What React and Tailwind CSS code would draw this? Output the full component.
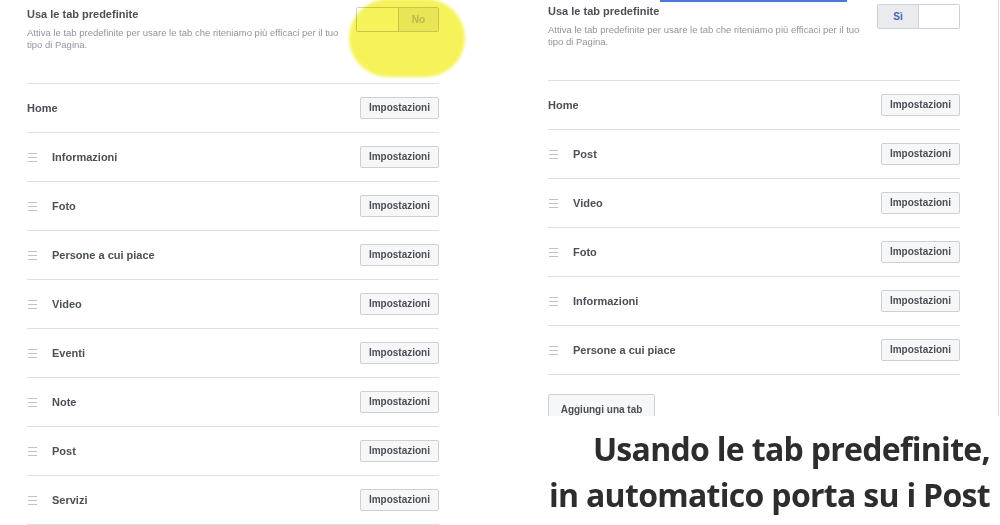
import React from 'react'

const LEFT_TABS = ['Informazioni', 'Foto', 'Persone a cui piace', 'Video', 'Eventi', 'Note', 'Post', 'Servizi']
const RIGHT_TABS = ['Post', 'Video', 'Foto', 'Informazioni', 'Persone a cui piace']

const ui = { fontFamily: '"Liberation Sans", Arial, sans-serif' }

function DragIcon() {
  return (
    <svg width="10" height="9" viewBox="0 0 10 9" className="ml-[1px]">
      <rect x="0" y="0" width="9" height="1" fill="#bec2c9" />
      <rect x="0" y="4" width="9" height="1" fill="#bec2c9" />
      <rect x="0" y="8" width="9" height="1" fill="#bec2c9" />
    </svg>
  )
}

function SettingsButton() {
  return (
    <button className="h-[22px] px-[8px] rounded-[2px] border border-[#ced0d4] bg-[#f6f7f9] text-[10px] font-bold text-[#4b4f56] leading-none">
      Impostazioni
    </button>
  )
}

function Row({ label, drag }) {
  return (
    <div className="h-[49px] border-t border-[#dddfe2] flex items-center justify-between">
      <div className="flex items-center">
        {drag && (
          <div className="w-[25px] flex items-center">
            <DragIcon />
          </div>
        )}
        <span className="text-[11px] font-bold text-[#4b4f56]">{label}</span>
      </div>
      <SettingsButton />
    </div>
  )
}

function Header({ on, pt }) {
  return (
    <div className={`flex justify-between items-start pb-[32px] ${pt}`}>
      <div>
        <div className="text-[11px] font-bold leading-[16px] text-[#4b4f56]">Usa le tab predefinite</div>
        <div className="mt-[5px] w-[318px] text-[9.5px] leading-[12px] text-[#90949c]">
          Attiva le tab predefinite per usare le tab che riteniamo più efficaci per il tuo tipo di Pagina.
        </div>
      </div>
      <div className="mt-[1px] flex h-[25px] w-[83px] border border-[#ced0d4] rounded-[2px] overflow-hidden">
        {on ? (
          <>
            <div className="w-[41px] bg-[#e9ebee] border-r border-[#ced0d4] flex items-center justify-center text-[10px] font-bold text-[#4267b2]">Sì</div>
            <div className="flex-1 bg-white" />
          </>
        ) : (
          <>
            <div className="w-[42px] bg-white border-r border-[#ced0d4]" />
            <div className="flex-1 bg-[#f1f2f4] flex items-center justify-center text-[10px] font-bold text-[#bfc2c8]">No</div>
          </>
        )}
      </div>
    </div>
  )
}

export default function App() {
  return (
    <div className="relative w-[1000px] h-[525px] overflow-hidden bg-white flex" style={ui}>
      {/* left screenshot */}
      <div className="w-[500px] pl-[27px]">
        <div className="w-[412px]">
          <Header on={false} pt="pt-[6px]" />
          <Row label="Home" />
          {LEFT_TABS.map(t => <Row key={t} label={t} drag />)}
          <div className="border-t border-[#dddfe2]" />
        </div>
      </div>

      {/* highlight */}
      <div className="absolute left-[349px] top-[-1px] w-[116px] h-[78px] rounded-full bg-[#f6f35a] mix-blend-multiply blur-[1.5px]" />

      {/* right screenshot */}
      <div className="w-[500px] flex flex-col">
        <div className="relative h-[416px] w-[499px] border-r border-[#dddfe2] overflow-hidden pl-[48px]">
          <div className="absolute left-[160px] top-0 w-[187px] h-[2px] bg-[#4a78d6]" />
          <div className="w-[412px]">
            <Header on pt="pt-[3px]" />
            <Row label="Home" />
            {RIGHT_TABS.map(t => <Row key={t} label={t} drag />)}
            <div className="border-t border-[#dddfe2]" />
            <button className="mt-[19px] h-[30px] w-[107px] rounded-[2px] border border-[#ced0d4] bg-[#f6f7f9] text-[10px] font-bold text-[#4b4f56]">
              Aggiungi una tab
            </button>
          </div>
        </div>
        <div
          className="pt-[10px] pr-[10px] text-right text-[32px] font-bold leading-[46px] tracking-[-0.7px] text-[#2d2d2d]"
          style={{ fontFamily: '"Open Sans", "Noto Sans", sans-serif' }}
        >
          Usando le tab predefinite,
          <br />
          in automatico porta su i Post
        </div>
      </div>
    </div>
  )
}
